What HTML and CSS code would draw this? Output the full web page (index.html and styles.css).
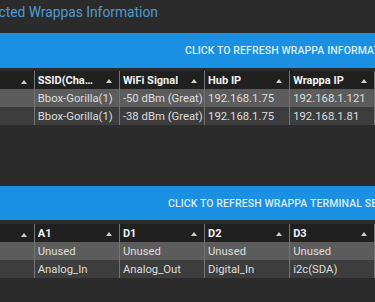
FILE: index.html
```html
<!DOCTYPE html>
<html>
<head>
<meta charset="utf-8">
<link rel="stylesheet" href="styles.css">
</head>
<body>
<div class="page">
  <h1 class="title">Connected Wrappas Information</h1>
  <div class="refresh refresh-info">CLICK TO REFRESH WRAPPA INFORMATION</div>
  <div class="grid-wrap">
    <table class="grid">
      <colgroup><col class="c0"><col class="c"><col class="c"><col class="c"><col class="c"><col class="c"></colgroup>
      <thead>
        <tr>
          <th><span class="lbl"></span><span class="sort"></span></th>
          <th><span class="lbl">SSID(Channel)</span><span class="sort"></span></th>
          <th><span class="lbl">WiFi Signal</span><span class="sort"></span></th>
          <th><span class="lbl">Hub IP</span><span class="sort"></span></th>
          <th><span class="lbl">Wrappa IP</span><span class="sort"></span></th>
          <th><span class="lbl">MAC</span><span class="sort"></span></th>
        </tr>
      </thead>
      <tbody>
        <tr class="odd"><td></td><td>Bbox-Gorilla(1)</td><td>-50 dBm (Great)</td><td>192.168.1.75</td><td>192.168.1.121</td><td></td></tr>
        <tr class="even"><td></td><td>Bbox-Gorilla(1)</td><td>-38 dBm (Great)</td><td>192.168.1.75</td><td>192.168.1.81</td><td></td></tr>
      </tbody>
    </table>
  </div>
  <div class="spacer"></div>
  <div class="refresh refresh-term">CLICK TO REFRESH WRAPPA TERMINAL SETTINGS</div>
  <div class="grid-wrap">
    <table class="grid">
      <colgroup><col class="c0"><col class="c"><col class="c"><col class="c"><col class="c"><col class="c"></colgroup>
      <thead>
        <tr>
          <th><span class="lbl"></span><span class="sort"></span></th>
          <th><span class="lbl">A1</span><span class="sort"></span></th>
          <th><span class="lbl">D1</span><span class="sort"></span></th>
          <th><span class="lbl">D2</span><span class="sort"></span></th>
          <th><span class="lbl">D3</span><span class="sort"></span></th>
          <th><span class="lbl">D4</span><span class="sort"></span></th>
        </tr>
      </thead>
      <tbody>
        <tr class="odd"><td></td><td>Unused</td><td>Unused</td><td>Unused</td><td>Unused</td><td></td></tr>
        <tr class="even"><td></td><td>Analog_In</td><td>Analog_Out</td><td>Digital_In</td><td>i2c(SDA)</td><td></td></tr>
      </tbody>
    </table>
  </div>
</div>
</body>
</html>
```
FILE: styles.css
```css
html, body {
  margin: 0;
  padding: 0;
  background: #2b2b2b;
  overflow: hidden;
}
body {
  font-family: Roboto, "Liberation Sans", sans-serif;
  width: 375px;
  height: 302px;
}
.page {
  display: flex;
  flex-direction: column;
  overflow: hidden;
  width: 375px;
}
.title {
  margin: 0 0 0 -41px;
  height: 33px;
  padding-top: 1px;
  box-sizing: border-box;
  font-size: 13.8px;
  font-weight: 400;
  color: #4f9bd4;
  white-space: nowrap;
  line-height: 22px;
}
.refresh {
  background: #1b8fe1;
  color: #d9edfb;
  font-size: 10.5px;
  font-weight: 500;
  letter-spacing: 0.1px;
  white-space: nowrap;
  overflow: hidden;
  display: flex;
  align-items: center;
  box-sizing: border-box;
}
.refresh-info {
  height: 35px;
  padding-left: 185px;
  margin-bottom: 3px;
}
.refresh-term {
  height: 34px;
  padding-left: 168px;
  margin-bottom: 4px;
}
.spacer {
  height: 61px;
}
.grid-wrap {
  overflow: hidden;
  width: 375px;
}
.grid {
  border-collapse: collapse;
  table-layout: fixed;
  width: 460px;
}
.grid col.c0 { width: 34px; }
.grid col.c { width: 84.5px; }
.grid th, .grid td {
  height: 18px;
  padding: 0 0 0 3px;
  box-sizing: border-box;
  border-left: 1px solid #747474;
  white-space: nowrap;
  overflow: hidden;
  text-align: left;
}
.grid th:first-child, .grid td:first-child {
  border-left: none;
}
.grid th {
  background: #202020;
  color: #f2f2f2;
  font-size: 11px;
  font-weight: 700;
  padding-right: 7px;
}
.grid th .lbl {
  display: inline-block;
  max-width: 57px;
  overflow: hidden;
  text-overflow: ellipsis;
  vertical-align: middle;
}
.grid th .sort {
  float: right;
  width: 0;
  height: 0;
  margin-top: 6px;
  border-left: 3px solid transparent;
  border-right: 3px solid transparent;
  border-bottom: 4px solid #cfcfcf;
}
.grid td {
  color: #dedede;
  font-size: 11.3px;
}
.grid tr.odd td { background: #5c5c5c; }
.grid tr.even td { background: #3d3d3d; }
```
